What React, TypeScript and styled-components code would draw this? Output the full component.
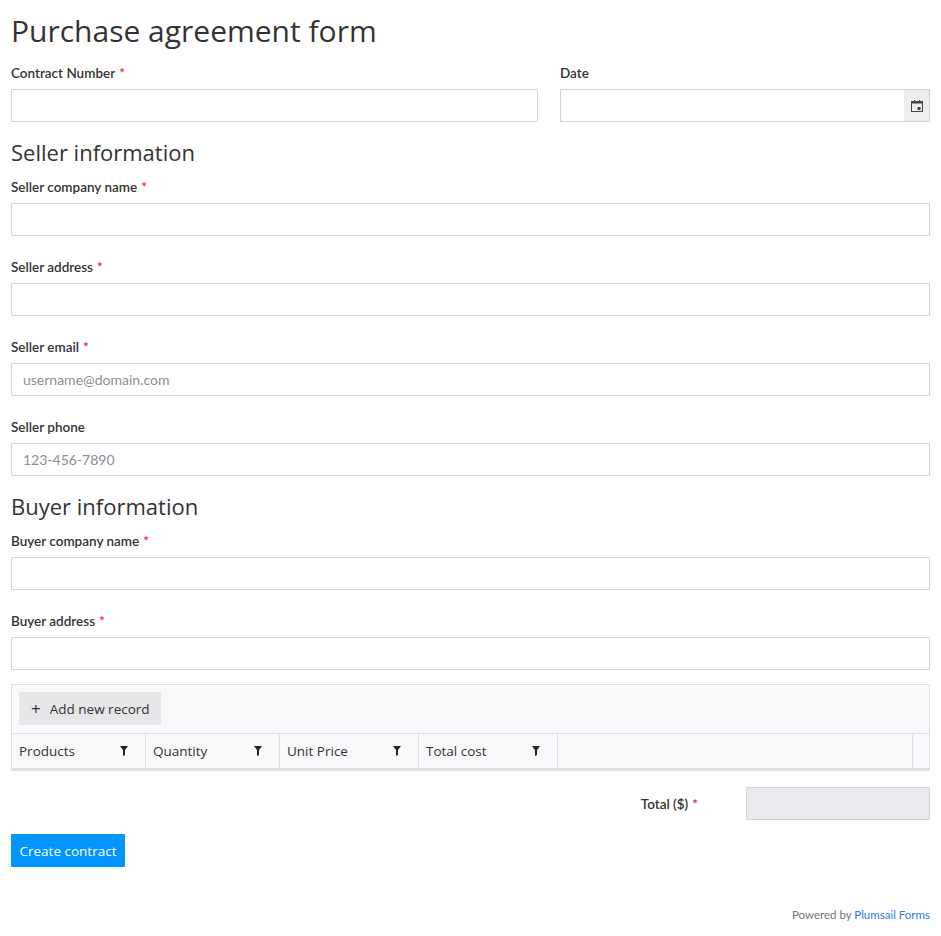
import * as React from 'react';
import styled, { createGlobalStyle } from 'styled-components';

const Global = createGlobalStyle`
  body { margin: 0; background: #fff; font-family: Lato, "Open Sans", sans-serif; color: #333; }
`;

const Page = styled.div`
  padding: 10px 11px 0 11px;
  height: 926px;
  position: relative;
`;
const Title = styled.h1`
  font-family: "Open Sans", sans-serif;
  font-weight: 500;
  font-size: 30px;
  margin: 0 0 13px 0;
  line-height: 42px;
`;
const Heading = styled.h2`
  font-family: "Open Sans", sans-serif;
  font-weight: 500;
  font-size: 22px;
  margin: 0 0 12px 0;
  line-height: 30px;
`;
const Row = styled.div`
  display: grid;
  grid-template-columns: 527px 1fr;
  column-gap: 22px;
`;
const Field = styled.div<{ $mb?: number }>`
  display: flex;
  flex-direction: column;
  margin-bottom: ${(p) => p.$mb ?? 23}px;
`;
const Label = styled.label`
  font-size: 13.5px;
  font-weight: 600;
  line-height: 16px;
  margin-bottom: 8px;
  color: #333;
`;
const Req = styled.span`
  color: #e0204a;
  margin-left: 4px;
`;
const Input = styled.input<{ $grey?: boolean }>`
  box-sizing: border-box;
  height: 33px;
  width: 100%;
  border: 1px solid #ced4da;
  border-radius: 1px;
  padding: 0 11px;
  font-family: Lato, sans-serif;
  font-size: 14px;
  background: ${(p) => (p.$grey ? '#e9eaed' : '#fff')};
  &::placeholder { color: #8a8f96; }
`;
const DateWrap = styled.div`
  display: flex;
  height: 33px;
  border: 1px solid #ced4da;
  box-sizing: border-box;
`;
const DateBtn = styled.div`
  width: 25px;
  background: #eceef0;
  display: flex;
  align-items: center;
  justify-content: center;
`;
const Bare = styled.input`
  flex: 1;
  border: 0;
  outline: none;
`;
const Grid = styled.div`
  border: 1px solid #dde0e4;
  background: #f8f9fa;
  margin-top: -9px;
`;
const Toolbar = styled.div`
  padding: 7px 7px 8px;
  border-bottom: 1px solid #dde0e4;
`;
const AddBtn = styled.button`
  height: 33px;
  border: 0;
  background: #e6e7e9;
  padding: 0 11px 0 12px;
  font-family: "Open Sans", sans-serif;
  font-size: 13.5px;
  color: #333;
  display: flex;
  align-items: center;
  gap: 9px;
`;
const HeadRow = styled.div`
  display: grid;
  grid-template-columns: 134px 134px 139px 139px 1fr 16px;
  height: 34px;
  border-bottom: 2px solid #dde0e4;
`;
const HeadCell = styled.div`
  display: flex;
  align-items: center;
  justify-content: space-between;
  padding: 0 17px 0 7px;
  border-right: 1px solid #dde0e4;
  font-family: "Open Sans", sans-serif;
  font-size: 13.5px;
  &:last-child { border-right: 0; }
`;
const TotalRow = styled.div`
  display: flex;
  justify-content: flex-end;
  align-items: center;
  margin-top: 16px;
  gap: 48px;
`;
const TotalInput = styled(Input)`
  width: 184px;
`;
const Submit = styled.button`
  margin-top: 14px;
  height: 33px;
  width: 114px;
  border: 0;
  border-radius: 1px;
  background: #0095ff;
  color: #fff;
  font-family: "Open Sans", sans-serif;
  font-size: 13.5px;
`;
const Footer = styled.div`
  position: absolute;
  right: 11px;
  top: 908px;
  font-size: 11.5px;
  color: #777;
  a { color: #2b7ed8; text-decoration: none; }
`;

const Filter = () => (
  <svg width="8" height="10" viewBox="0 0 8 10">
    <path d="M0 0h8L5 4v5L3 10V4z" fill="#222" />
  </svg>
);

function TextField({ label, req, placeholder, mb }: { label: string; req?: boolean; placeholder?: string; mb?: number }) {
  return (
    <Field $mb={mb}>
      <Label>{label}{req && <Req>*</Req>}</Label>
      <Input placeholder={placeholder} />
    </Field>
  );
}

export default function App() {
  return (
    <Page>
      <Global />
      <Title>Purchase agreement form</Title>
      <Row>
        <Field $mb={15}>
          <Label>Contract Number<Req>*</Req></Label>
          <Input />
        </Field>
        <Field $mb={15}>
          <Label>Date</Label>
          <DateWrap>
            <Bare />
            <DateBtn>
              <svg width="12" height="12" viewBox="0 0 12 12">
                <rect x="0.5" y="1.5" width="11" height="10" fill="none" stroke="#444" />
                <rect x="0.5" y="1.5" width="11" height="2" fill="#444" />
                <rect x="3" y="0" width="1" height="2" fill="#444" />
                <rect x="8" y="0" width="1" height="2" fill="#444" />
                <rect x="6.5" y="7" width="3" height="3" fill="#444" />
              </svg>
            </DateBtn>
          </DateWrap>
        </Field>
      </Row>
      <Heading>Seller information</Heading>
      <TextField label="Seller company name" req />
      <TextField label="Seller address" req />
      <TextField label="Seller email" req placeholder="username@domain.com" />
      <TextField label="Seller phone" placeholder="123-456-7890" mb={15} />
      <Heading>Buyer information</Heading>
      <TextField label="Buyer company name" req />
      <TextField label="Buyer address" req />
      <Grid>
        <Toolbar>
          <AddBtn><span style={{ fontSize: 17 }}>+</span>Add new record</AddBtn>
        </Toolbar>
        <HeadRow>
          {['Products', 'Quantity', 'Unit Price', 'Total cost'].map((h) => (
            <HeadCell key={h}>{h}<Filter /></HeadCell>
          ))}
          <HeadCell />
          <HeadCell />
        </HeadRow>
      </Grid>
      <TotalRow>
        <Label style={{ margin: 0 }}>Total ($)<Req>*</Req></Label>
        <TotalInput $grey readOnly />
      </TotalRow>
      <Submit>Create contract</Submit>
      <Footer>Powered by <a>Plumsail Forms</a></Footer>
    </Page>
  );
}
